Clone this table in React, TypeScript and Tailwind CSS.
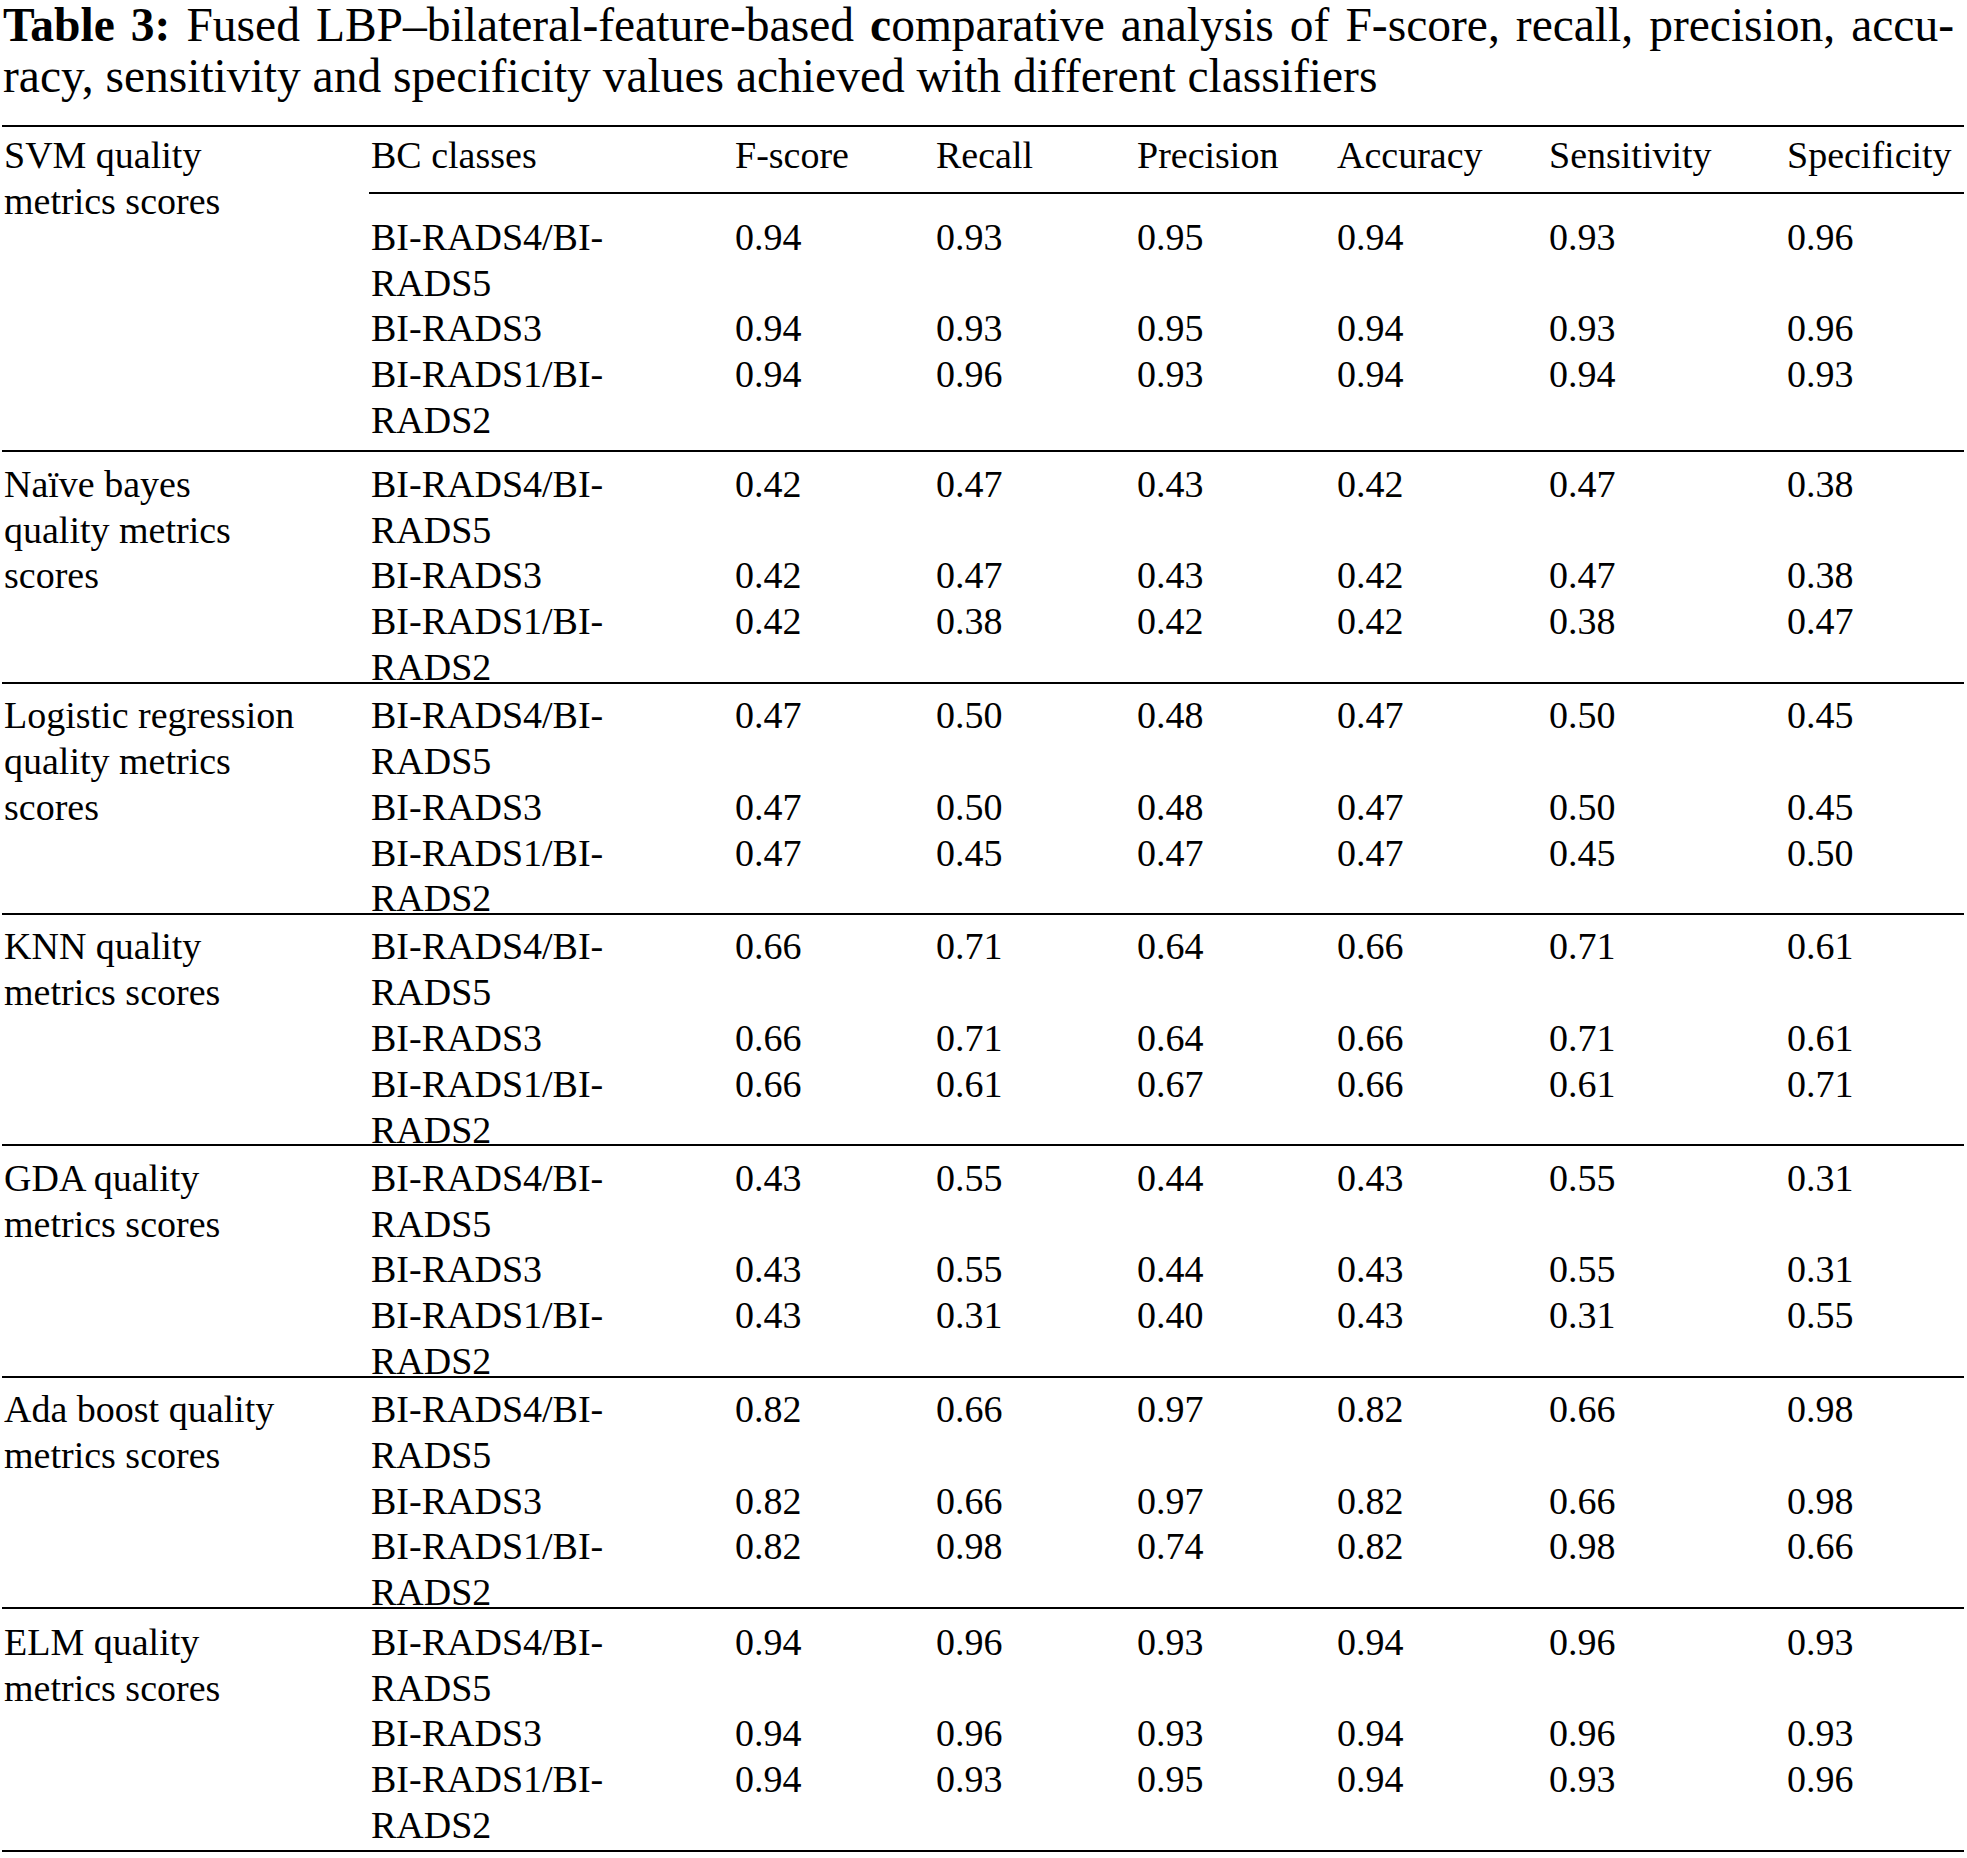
import { Fragment } from "react";

type Group = { label: string[]; rows: string[][] };

const classes: string[][] = [
  ["BI-RADS4/BI-", "RADS5"],
  ["BI-RADS3"],
  ["BI-RADS1/BI-", "RADS2"],
];

const groups: Group[] = [
  {
    label: ["SVM quality", "metrics scores"],
    rows: [
      ["0.94", "0.93", "0.95", "0.94", "0.93", "0.96"],
      ["0.94", "0.93", "0.95", "0.94", "0.93", "0.96"],
      ["0.94", "0.96", "0.93", "0.94", "0.94", "0.93"],
    ],
  },
  {
    label: ["Naïve bayes", "quality metrics", "scores"],
    rows: [
      ["0.42", "0.47", "0.43", "0.42", "0.47", "0.38"],
      ["0.42", "0.47", "0.43", "0.42", "0.47", "0.38"],
      ["0.42", "0.38", "0.42", "0.42", "0.38", "0.47"],
    ],
  },
  {
    label: ["Logistic regression", "quality metrics", "scores"],
    rows: [
      ["0.47", "0.50", "0.48", "0.47", "0.50", "0.45"],
      ["0.47", "0.50", "0.48", "0.47", "0.50", "0.45"],
      ["0.47", "0.45", "0.47", "0.47", "0.45", "0.50"],
    ],
  },
  {
    label: ["KNN quality", "metrics scores"],
    rows: [
      ["0.66", "0.71", "0.64", "0.66", "0.71", "0.61"],
      ["0.66", "0.71", "0.64", "0.66", "0.71", "0.61"],
      ["0.66", "0.61", "0.67", "0.66", "0.61", "0.71"],
    ],
  },
  {
    label: ["GDA quality", "metrics scores"],
    rows: [
      ["0.43", "0.55", "0.44", "0.43", "0.55", "0.31"],
      ["0.43", "0.55", "0.44", "0.43", "0.55", "0.31"],
      ["0.43", "0.31", "0.40", "0.43", "0.31", "0.55"],
    ],
  },
  {
    label: ["Ada boost quality", "metrics scores"],
    rows: [
      ["0.82", "0.66", "0.97", "0.82", "0.66", "0.98"],
      ["0.82", "0.66", "0.97", "0.82", "0.66", "0.98"],
      ["0.82", "0.98", "0.74", "0.82", "0.98", "0.66"],
    ],
  },
  {
    label: ["ELM quality", "metrics scores"],
    rows: [
      ["0.94", "0.96", "0.93", "0.94", "0.96", "0.93"],
      ["0.94", "0.96", "0.93", "0.94", "0.96", "0.93"],
      ["0.94", "0.93", "0.95", "0.94", "0.93", "0.96"],
    ],
  },
];

const headers = ["BC classes", "F-score", "Recall", "Precision", "Accuracy", "Sensitivity", "Specificity"];

function DataGrid({ rows }: { rows: string[][] }) {
  return (
    <div className="grid grid-cols-[364px_201px_201px_200px_212px_238px_1fr]">
      {rows.map((r, i) => (
        <Fragment key={i}>
          <div className="pl-[2px]">
            {classes[i].map((l, j) => (
              <div key={j}>{l}</div>
            ))}
          </div>
          {r.map((v, k) => (
            <div key={k} className="pl-[2px]">
              {v}
            </div>
          ))}
        </Fragment>
      ))}
    </div>
  );
}

function Label({ lines, className }: { lines: string[]; className?: string }) {
  return (
    <div className={"w-[367px] shrink-0 pl-[2px] " + (className ?? "")}>
      {lines.map((l, i) => (
        <div key={i}>{l}</div>
      ))}
    </div>
  );
}

export default function App() {
  const first = groups[0];
  const middle = groups.slice(1, groups.length - 1);
  const last = groups[groups.length - 1];
  return (
    <div className="w-[1967px] min-h-[1858px] bg-white text-black font-['Liberation_Serif',serif] overflow-hidden">
      <div className="pl-[3px] w-[1954px] mb-[23px] text-[47.5px] leading-[51px]">
        <div className="text-justify [text-align-last:justify]">
          <span className="font-bold">Table 3:</span> Fused LBP–bilateral-feature-based <span className="font-bold">c</span>
          omparative analysis of F-score, recall, precision, accu-
        </div>
        <div>racy, sensitivity and specificity values achieved with different classifiers</div>
      </div>

      <div className="ml-[2px] w-[1962px] text-[38px] leading-[45.8px]">
        <div className="flex h-[325.4px] border-t-2 border-black">
          <Label lines={first.label} className="pt-[6px]" />
          <div className="flex-1">
            <div className="grid grid-cols-[364px_201px_201px_200px_212px_238px_1fr] pt-[6px] pb-[13px] border-b-2 border-black">
              {headers.map((h) => (
                <div key={h} className="pl-[2px]">
                  {h}
                </div>
              ))}
            </div>
            <div className="pt-[21px]">
              <DataGrid rows={first.rows} />
            </div>
          </div>
        </div>

        {middle.map((g) => (
          <div key={g.label.join(" ")} className="flex h-[231.3px] border-t-2 border-black pt-[9.5px]">
            <Label lines={g.label} />
            <div className="flex-1">
              <DataGrid rows={g.rows} />
            </div>
          </div>
        ))}

        <div className="flex h-[245.4px] border-t-2 border-b-2 border-black pt-[11px]">
          <Label lines={last.label} />
          <div className="flex-1">
            <DataGrid rows={last.rows} />
          </div>
        </div>
      </div>
    </div>
  );
}
